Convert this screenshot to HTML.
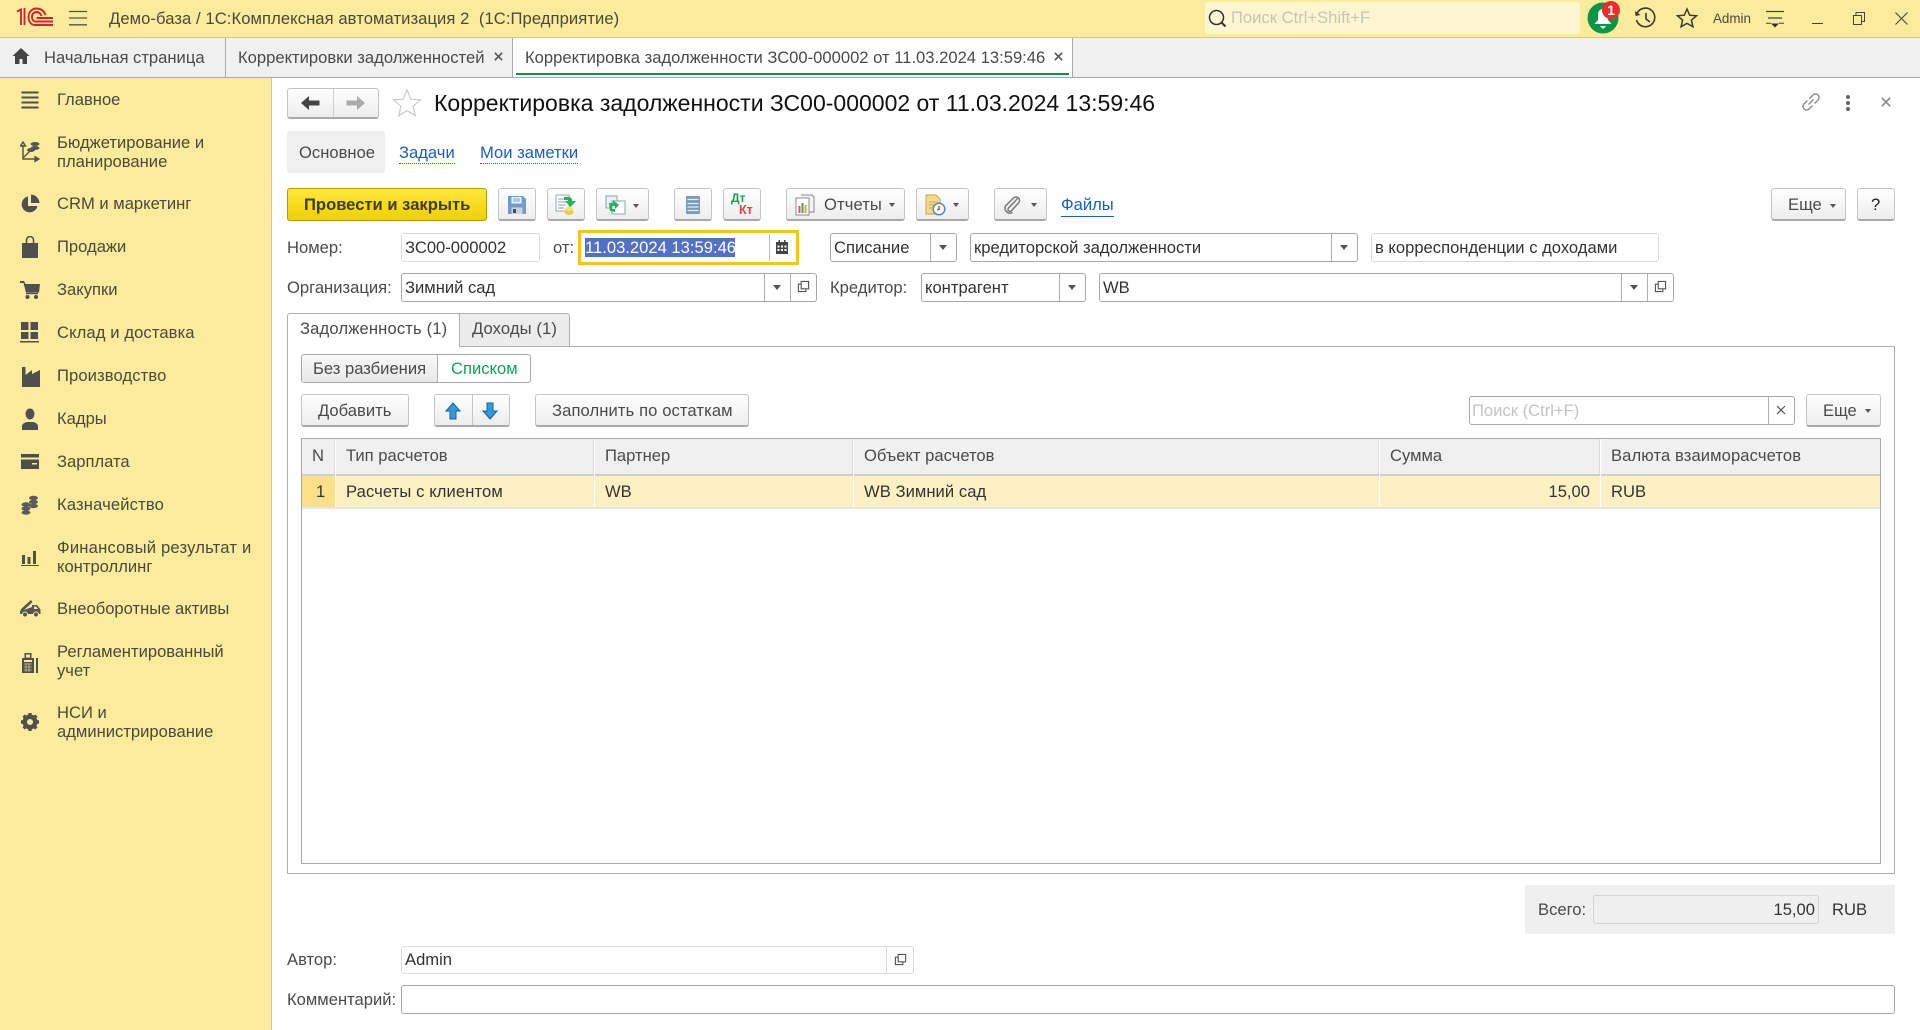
<!DOCTYPE html>
<html lang="ru"><head><meta charset="utf-8"><title>Корректировка задолженности</title>
<style>
html,body{margin:0;padding:0;width:1920px;height:1030px;overflow:hidden;background:#fff}
body{position:relative;font-family:"Liberation Sans",Arial,sans-serif;font-size:16.6px;color:#4a4a4a}
.a,.t,.f,.b,.v,.d,svg{position:absolute}
.t{white-space:nowrap;line-height:20px;height:20px;margin-top:1px}
.f{box-sizing:border-box;background:#fff;border:1px solid #a8a8a8;border-radius:3px}
.l{border-color:#dadada}
.b{box-sizing:border-box;background:linear-gradient(#fff,#ededed);border:1px solid #c4c4c4;border-bottom:2px solid #a9a9a9;border-radius:3px}
.v{width:1px;background:#b0b0b0}
.d{width:0;height:0;border-left:4px solid transparent;border-right:4px solid transparent;border-top:5px solid #555}
.e{border-left-width:3.5px;border-right-width:3.5px;border-top-width:4px}
.k{color:#333}
.s{color:#4a4a3c}
.h{background:#f0f0f0}
.lnk{color:#1a5fc4}
</style></head><body>
<svg width="0" height="0" style="left:0;top:0"><defs>
<symbol id="op" viewBox="0 0 14 14"><path d="M4.5 1.5h8v8h-8zM4.5 4.5h-3v8h8v-3" fill="none" stroke="#555" stroke-width="1.2"/></symbol>
<symbol id="x" viewBox="0 0 12 12"><path d="M2 2l8 8M10 2l-8 8" fill="none" stroke="#555" stroke-width="1.8"/></symbol>
</defs></svg>

<!-- top bar -->
<div class="a" style="left:0;top:0;width:1920px;height:38px;background:#fbeb9c;border-bottom:1px solid #d8c87c;box-sizing:border-box"></div>
<svg style="left:16px;top:7px" width="38" height="21" viewBox="0 0 38 21"><g fill="none" stroke="#d9232a" stroke-width="1.9"><path d="M1 4.5L5 2.5V18M8.5 1V18"/><path d="M37 18H19C15 18 12.5 14.5 12.5 10C12.5 5 16 1.5 20.500 1.500C25 1.500 28 4 29.500 8"/><path d="M37 14.500H19.500C17.500 14.500 16 12.500 16 10C16 7 18 5 20.500 5C23 5 24.500 6.500 25.500 9"/><path d="M37 11H20.500"/></g></svg>
<svg style="left:69px;top:10px" width="18" height="16" viewBox="0 0 18 16"><path d="M0 1.500h18M0 8h18M0 14.800h18" stroke="#55554a" stroke-width="1.300"/></svg>
<div class="t s" style="left:109px;top:8px;letter-spacing:.08px">Демо-база / 1С:Комплексная автоматизация 2&nbsp; (1С:Предприятие)</div>
<div class="a" style="left:1205px;top:2px;width:375px;height:32px;background:#fdf6d0;border-radius:3px"></div>
<svg style="left:1207px;top:8px" width="21" height="21" viewBox="0 0 21 21"><circle cx="9.500" cy="9.500" r="7" fill="none" stroke="#333" stroke-width="1.500"/><path d="M14.500 14.500l4 4" stroke="#333" stroke-width="2"/></svg>
<div class="t" style="left:1231px;top:7px;color:#c6c6b4">Поиск Ctrl+Shift+F</div>
<svg style="left:1585px;top:0" width="36" height="36" viewBox="0 0 36 36"><circle cx="18" cy="18" r="15.500" fill="#0a9647"/><path d="M18 9c-3.500 0-5 3-5 6v5l-3.500 4h17L23 20v-5c0-3-1.500-6-5-6z" fill="#fff"/><path d="M15 26h6l-3 3z" fill="#fff"/><circle cx="26" cy="10" r="9" fill="#f32a2a"/><text x="26" y="15" text-anchor="middle" font-family="Liberation Sans" font-weight="700" font-size="14" fill="#fff">1</text></svg>
<svg style="left:1634px;top:7px" width="23" height="23" viewBox="0 0 23 23"><path d="M3 6.500A9.300 9.300 0 1 1 2.500 13" fill="none" stroke="#3a3a3a" stroke-width="1.600"/><path d="M1 4l.5 5 5-1z" fill="#3a3a3a"/><path d="M12 6v6l4 3" fill="none" stroke="#3a3a3a" stroke-width="1.600"/></svg>
<svg style="left:1676px;top:7px" width="22" height="22" viewBox="0 0 22 22"><path d="M11 2l2.700 6.200 6.800.6-5.100 4.400 1.500 6.600L11 16.400 5.100 19.800l1.500-6.600L1.500 8.800l6.800-.6z" fill="none" stroke="#3a3a3a" stroke-width="1.500"/></svg>
<div class="t s" style="left:1713px;top:8px;font-size:13.4px">Admin</div>
<svg style="left:1766px;top:10px" width="18" height="19" viewBox="0 0 18 19"><path d="M0 1.500h18M2 8h14" stroke="#444" stroke-width="1.300"/><path d="M0 13.300h5M13 13.300h5" stroke="#444" stroke-width="1"/><path d="M5 13.500h8l-4 4z" fill="#333"/></svg>
<div class="a" style="left:1812px;top:23px;width:11px;height:1px;background:#444"></div>
<svg style="left:1853px;top:12px" width="12" height="13" viewBox="0 0 12 13"><path d="M.5 3.500h8v9h-8zM3 3.500V.5h8.500v9H8.500" fill="none" stroke="#444" stroke-width="1"/></svg>
<svg style="left:1895px;top:12px" width="13" height="13" viewBox="0 0 13 13"><path d="M.5.5l12 12M12.500.5l-12 12" stroke="#444" stroke-width="1.100"/></svg>

<!-- tabs -->
<div class="a h" style="left:0;top:38px;width:1920px;height:40px;border-bottom:1px solid #a9a9a9;box-sizing:border-box"></div>
<div class="a" style="left:225px;top:38px;width:1px;height:39px;background:#a9a9a9"></div>
<div class="a" style="left:512px;top:38px;width:561px;height:39px;background:#fff;border-left:1px solid #a9a9a9;border-right:1px solid #a9a9a9;box-sizing:border-box"></div>
<div class="a" style="left:516px;top:73px;width:553px;height:2px;background:#0a8f4d"></div>
<svg style="left:12px;top:47px" width="18" height="17" viewBox="0 0 18 17"><path d="M9 1L0.500 9H3v8h4.500v-5h3v5H15V9h2.500z" fill="#444"/></svg>
<div class="t" style="left:44px;top:47px">Начальная страница</div>
<div class="t" style="left:238px;top:47px">Корректировки задолженностей</div>
<svg style="left:493px;top:51px" width="11" height="11"><use href="#x"/></svg>
<div class="t" style="left:525px;top:47px">Корректировка задолженности ЗС00-000002 от 11.03.2024 13:59:46</div>
<svg style="left:1053px;top:51px" width="11" height="11"><use href="#x"/></svg>

<!-- sidebar -->
<div class="a" style="left:0;top:78px;width:272px;height:952px;background:#fbeb9c;border-right:1px solid #d8c87c;box-sizing:border-box"></div>
<div class="t s" style="left:57px;top:89px">Главное</div>
<div class="t s" style="left:57px;top:132px">Бюджетирование и</div>
<div class="t s" style="left:57px;top:151px">планирование</div>
<div class="t s" style="left:57px;top:193px">CRM и маркетинг</div>
<div class="t s" style="left:57px;top:236px">Продажи</div>
<div class="t s" style="left:57px;top:279px">Закупки</div>
<div class="t s" style="left:57px;top:322px;letter-spacing:.1px">Склад и доставка</div>
<div class="t s" style="left:57px;top:365px;letter-spacing:.1px">Производство</div>
<div class="t s" style="left:57px;top:408px">Кадры</div>
<div class="t s" style="left:57px;top:451px">Зарплата</div>
<div class="t s" style="left:57px;top:494px;letter-spacing:.15px">Казначейство</div>
<div class="t s" style="left:57px;top:537px;letter-spacing:.2px">Финансовый результат и</div>
<div class="t s" style="left:57px;top:556px">контроллинг</div>
<div class="t s" style="left:57px;top:598px">Внеоборотные активы</div>
<div class="t s" style="left:57px;top:641px">Регламентированный</div>
<div class="t s" style="left:57px;top:660px">учет</div>
<div class="t s" style="left:57px;top:702px">НСИ и</div>
<div class="t s" style="left:57px;top:721px">администрирование</div>
<!-- sidebar icons -->
<svg style="left:20px;top:90px" width="20" height="20" viewBox="0 0 20 20"><path d="M1.500 2.500h17M1.500 7.500h17M1.500 12.500h17M1.500 17.500h17" stroke="#4f4f4f" stroke-width="2"/></svg>
<svg style="left:20px;top:141px" width="20" height="22" viewBox="0 0 20 22"><path d="M3 1l-2.500 4h5zM3 4v14h12" fill="none" stroke="#555" stroke-width="1.500"/><path d="M15 15.500l4 2.500-4 2.500zM3 17L12 8" fill="#555" stroke="#555" stroke-width="1.300"/><ellipse cx="15" cy="3" rx="4.500" ry="2" fill="#555"/><ellipse cx="15" cy="7" rx="4.500" ry="2" fill="#555"/><ellipse cx="11" cy="9" rx="4" ry="2" fill="#555"/></svg>
<svg style="left:20px;top:194px" width="20" height="20" viewBox="0 0 20 20"><path d="M8 2.500a8 8 0 1 0 9.500 9.500H8z" fill="#4f4f4f"/><path d="M11 0.500V9h8.500A9 9 0 0 0 11 .5z" fill="#4f4f4f"/></svg>
<svg style="left:22px;top:236px" width="16" height="22" viewBox="0 0 16 22"><path d="M0 7h16v15H0z" fill="#4f4f4f"/><path d="M4.500 8V4a3.500 3.500 0 0 1 7 0v4" fill="none" stroke="#4f4f4f" stroke-width="1.500"/></svg>
<svg style="left:20px;top:280px" width="20" height="20" viewBox="0 0 20 20"><path d="M0 1h4l1.500 3H20l-1 8.500H6L3.500 3H0z" fill="#4f4f4f"/><path d="M6 13.500h12" stroke="#4f4f4f" stroke-width="1.400"/><circle cx="7.500" cy="17" r="2" fill="#4f4f4f"/><circle cx="16" cy="17" r="2" fill="#4f4f4f"/></svg>
<svg style="left:20px;top:322px" width="19" height="21" viewBox="0 0 19 21"><path d="M1 0h7.500v8H1zM10.500 0H18v8h-7.500zM1 10h7.500v7H1zM10.500 10H18v7h-7.500zM0 19h19v1.500H0z" fill="#4f4f4f"/></svg>
<svg style="left:21px;top:366px" width="19" height="21" viewBox="0 0 19 21"><path d="M1 21V1h3.500v8L11 4v4l8-4v17z" fill="#4f4f4f"/></svg>
<svg style="left:22px;top:408px" width="16" height="22" viewBox="0 0 16 22"><ellipse cx="8" cy="6" rx="4.500" ry="5.500" fill="#4f4f4f"/><path d="M0 22v-4c0-2 3-4 5.500-4h5c2.500 0 5.500 2 5.500 4v4z" fill="#4f4f4f"/></svg>
<svg style="left:21px;top:453px" width="18" height="17" viewBox="0 0 18 17"><path d="M0 1h18v3.500H0zM0 6.500h18V16H0z" fill="#4f4f4f"/><path d="M11 10h5v1.500h-5z" fill="#fbeb9c"/></svg>
<svg style="left:21px;top:495px" width="18" height="20" viewBox="0 0 18 20"><g fill="#5b5b5b"><ellipse cx="12.500" cy="3" rx="4.500" ry="2.200"/><ellipse cx="12.500" cy="7" rx="4.500" ry="2.200"/><ellipse cx="12.500" cy="11" rx="4.500" ry="2.200"/><ellipse cx="5" cy="9.500" rx="4.500" ry="2.200"/><ellipse cx="5" cy="13.500" rx="4.500" ry="2.200"/><ellipse cx="5" cy="17.500" rx="4.500" ry="2.200"/></g></svg>
<svg style="left:21px;top:549px" width="18" height="17" viewBox="0 0 18 17"><path d="M1 6h3v9H1zM6.500 8h3v7h-3zM12 2h3v13h-3zM0 16h18v1H0z" fill="#4f4f4f"/></svg>
<svg style="left:20px;top:598px" width="21" height="20" viewBox="0 0 21 20"><path d="M0 14l1-3L11 2l1.500 2L4 12l8-3V7h5l3.500 4.500V16H0z" fill="#555"/><circle cx="5" cy="16.500" r="2.500" fill="#555" stroke="#fbeb9c"/><circle cx="16" cy="16.500" r="2.500" fill="#555" stroke="#fbeb9c"/><path d="M14 8.500h2l2 2.500h-4z" fill="#fbeb9c"/></svg>
<svg style="left:22px;top:653px" width="16" height="20" viewBox="0 0 16 20"><path d="M2.500 0h7v5H12v15H0V5h2.500z" fill="#4f4f4f"/><path d="M4 1.500h4v3H4zM2 7h8v2H2z" fill="#fbeb9c"/><path d="M14 5h2v15h-2z" fill="#4f4f4f"/><path d="M2 11h8M2 14h8M2 17h8M4 10v9M7 10v9" stroke="#fbeb9c" stroke-width=".6"/></svg>
<svg style="left:20px;top:712px" width="20" height="20" viewBox="0 0 20 20"><circle cx="10" cy="10" r="5.500" fill="none" stroke="#4f4f4f" stroke-width="4"/><path d="M10 1v18M1 10h18M3.600 3.600l12.800 12.800M16.400 3.600L3.600 16.400" stroke="#4f4f4f" stroke-width="3.400"/><circle cx="10" cy="10" r="3" fill="#fbeb9c"/></svg>

<!-- header -->
<div class="b" style="left:287px;top:88px;width:92px;height:31px"></div>
<div class="v" style="left:333px;top:89px;height:28px;background:#d0d0d0"></div>
<svg style="left:301px;top:96px" width="19" height="14" viewBox="0 0 19 14"><path d="M8 0v4.500h10.500v5H8V14L0 7z" fill="#444"/></svg>
<svg style="left:346px;top:96px" width="19" height="14" viewBox="0 0 19 14"><path d="M11 0v4.500H.5v5H11V14l8-7z" fill="#aaa"/></svg>
<svg style="left:392px;top:88px" width="30" height="30" viewBox="0 0 30 30"><path d="M15 2l3.800 9.200 9.700.7-7.500 6.300 2.400 9.600L15 22.600 6.600 27.800 9 18.200 1.500 11.900l9.700-.7z" fill="none" stroke="#c9c9c9" stroke-width="1.200"/></svg>
<div class="t" style="left:434px;top:90px;line-height:24px;height:24px;font-size:23px;color:#111">Корректировка задолженности ЗС00-000002 от 11.03.2024 13:59:46</div>
<svg style="left:1801px;top:92px" width="20" height="20" viewBox="0 0 20 20"><path d="M8.500 6.500l3.500-3.500a3.500 3.500 0 0 1 5 5l-3.500 3.500M11.500 13.500L8 17a3.500 3.500 0 0 1-5-5l3.500-3.500M7.500 12.500l5-5" fill="none" stroke="#8a8a8a" stroke-width="1.400"/></svg>
<div class="a" style="left:1846px;top:95px;width:4px;height:4px;border-radius:2px;background:#666"></div>
<div class="a" style="left:1846px;top:101px;width:4px;height:4px;border-radius:2px;background:#666"></div>
<div class="a" style="left:1846px;top:107px;width:4px;height:4px;border-radius:2px;background:#666"></div>
<svg style="left:1881px;top:97px" width="10" height="10" viewBox="0 0 12 12"><path d="M1 1l10 10M11 1L1 11" stroke="#888" stroke-width="1.900"/></svg>
<div class="a h" style="left:287px;top:131px;width:98px;height:42px;border-radius:3px"></div>
<div class="t" style="left:299px;top:142px">Основное</div>
<div class="t lnk" style="left:399px;top:142px;border-bottom:1px dotted #1a5fc4">Задачи</div>
<div class="t lnk" style="left:480px;top:142px;border-bottom:1px dotted #1a5fc4">Мои заметки</div>

<!-- toolbar -->
<div class="b" style="left:287px;top:188px;width:200px;height:33px;background:linear-gradient(#ffe83c,#efd000);border:1px solid #b39c10;border-radius:3px"></div>
<div class="t" style="left:304px;top:194px;font-weight:700;color:#403c1c;font-size:16.6px">Провести и закрыть</div>
<div class="b" style="left:498px;top:188px;width:38px;height:33px"></div>
<svg style="left:508px;top:196px" width="18" height="18" viewBox="0 0 18 18"><path d="M0 0h15l3 3v15H0z" fill="#6f9ccc"/><path d="M3.500 1h10v6.500h-10z" fill="#f1f5f9"/><path d="M5 3h7M5 5h7" stroke="#6f9ccc"/><path d="M3.500 11.500h11V18h-11z" fill="#c9d5de"/><path d="M5 13h3v4H5z" fill="#446"/></svg>
<div class="b" style="left:547px;top:188px;width:38px;height:33px"></div>
<svg style="left:555px;top:194px" width="22" height="22" viewBox="0 0 22 22"><path d="M1 1h13v16H1z" fill="#fff" stroke="#9aa"/><path d="M3 5h8M3 8h8M3 11h8M3 14h6" stroke="#99a"/><path d="M9 3h5a3 3 0 0 1 3 3v1h4l-5.500 6L10 7h3V6H9z" fill="#1fb35c"/><ellipse cx="14" cy="18" rx="4.500" ry="3" fill="#e8c94a"/><ellipse cx="14" cy="15" rx="4.500" ry="2.200" fill="#f5e07a"/></svg>
<div class="b" style="left:596px;top:188px;width:53px;height:33px"></div>
<svg style="left:605px;top:195px" width="21" height="20" viewBox="0 0 21 20"><path d="M1 1h11v12H1z" fill="#eef" stroke="#8a9"/><path d="M7 6h13v13H7z" fill="#fff" stroke="#8a9"/><path d="M4 8h4V5l6 5-4 4v-3H7v3h3v3l-5-1z" fill="#21b45f"/></svg>
<div class="d e" style="left:633px;top:204px"></div>
<div class="b" style="left:674px;top:188px;width:38px;height:33px"></div>
<svg style="left:686px;top:196px" width="14" height="18" viewBox="0 0 14 18"><path d="M1 0h12a1 1 0 0 1 1 1v16a1 1 0 0 1-1 1H1a1 1 0 0 1-1-1V1a1 1 0 0 1 1-1z" fill="#7b9cb9"/><path d="M1.500 3.500h11M1.500 7.500h11M1.500 11h11M1.500 14.500h11" stroke="#e6eef4" stroke-width="1.200"/></svg>
<div class="b" style="left:723px;top:188px;width:38px;height:33px"></div>
<div class="t" style="left:731px;top:190px;font-size:12px;line-height:14px;font-weight:700;color:#17a155">Дт</div>
<div class="t" style="left:739px;top:202px;font-size:12.5px;line-height:14px;font-weight:700;color:#e8414a">Кт</div>
<div class="b" style="left:786px;top:188px;width:119px;height:33px"></div>
<svg style="left:795px;top:194px" width="20" height="22" viewBox="0 0 20 22"><path d="M6 1h11l2 2v15h-5" fill="#f3f3f3" stroke="#889"/><path d="M1 4h13v17H1z" fill="#fff" stroke="#889"/><path d="M3.500 12h2v7h-2z" fill="#e05050"/><path d="M6.500 9h2v10h-2z" fill="#39a860"/><path d="M9.500 11h2v8h-2z" fill="#d9a93a"/></svg>
<div class="t" style="left:824px;top:194px;letter-spacing:.1px">Отчеты</div>
<div class="d e" style="left:889px;top:203px"></div>
<div class="b" style="left:916px;top:188px;width:53px;height:33px"></div>
<svg style="left:925px;top:194px" width="21" height="22" viewBox="0 0 21 22"><path d="M1 1h10l4 4v15H1z" fill="#f3d98a" stroke="#c9a94a"/><path d="M4 8h8M4 11h5M4 14h5" stroke="#c9a94a"/><circle cx="14" cy="15" r="5.800" fill="#fff" stroke="#5b86b3" stroke-width="1.500"/><path d="M14 12v3.500h-2" stroke="#e04040" stroke-width="1.400" fill="none"/></svg>
<div class="d e" style="left:953px;top:203px"></div>
<div class="b" style="left:994px;top:188px;width:53px;height:33px"></div>
<svg style="left:1003px;top:196px" width="18" height="18" viewBox="0 0 18 18"><path d="M15 3L6 12.500a2 2 0 0 0 3 2.700l7-7.700a3.500 3.500 0 0 0-5-5L3 10.500a5 5 0 0 0 7 6.500" transform="translate(-.5 -.5)" fill="none" stroke="#777" stroke-width="1.500"/></svg>
<div class="d e" style="left:1031px;top:203px"></div>
<div class="t" style="left:1061px;top:194px;color:#1a5fc4;border-bottom:1px solid #1a5fc4;height:21px">Файлы</div>
<div class="b" style="left:1771px;top:188px;width:75px;height:33px"></div>
<div class="t" style="left:1788px;top:194px">Еще</div>
<div class="d e" style="left:1830px;top:204px"></div>
<div class="b" style="left:1857px;top:188px;width:38px;height:33px"></div>
<div class="t" style="left:1871px;top:194px;color:#222">?</div>

<!-- rows -->
<div class="t" style="left:287px;top:237px">Номер:</div>
<div class="f l" style="left:401px;top:233px;width:139px;height:29px"></div>
<div class="t k" style="left:405px;top:237px">ЗС00-000002</div>
<div class="t" style="left:553px;top:237px">от:</div>
<div class="f" style="left:578px;top:230px;width:221px;height:35px;border:3px solid #f5c518;border-radius:0"></div>
<div class="a" style="left:585px;top:238px;width:150px;height:19px;background:#5470c6"></div>
<div class="t" style="left:585px;top:237px;color:#fff">11.03.2024 13:59:46</div>
<div class="v" style="left:769px;top:234px;height:27px;background:#bbb"></div>
<svg style="left:776px;top:240px" width="12" height="14" viewBox="0 0 12 14"><path d="M0 2h12v12H0z" fill="#444"/><path d="M2.500 0h1.500v3H2.500zM8 0h1.500v3H8z" fill="#444"/><path d="M1.500 5.500h2v2h-2zM5 5.500h2v2H5zM8.500 5.500h2v2h-2zM1.500 9h2v2h-2zM5 9h2v2H5zM8.500 9h2v2h-2z" fill="#fff"/></svg>
<div class="f" style="left:830px;top:233px;width:127px;height:29px"></div>
<div class="v" style="left:930px;top:234px;height:27px"></div>
<div class="t k" style="left:834px;top:237px">Списание</div>
<div class="d" style="left:939px;top:245px"></div>
<div class="f" style="left:970px;top:233px;width:388px;height:29px"></div>
<div class="v" style="left:1331px;top:234px;height:27px"></div>
<div class="t k" style="left:974px;top:237px">кредиторской задолженности</div>
<div class="d" style="left:1340px;top:245px"></div>
<div class="f l" style="left:1371px;top:233px;width:288px;height:29px"></div>
<div class="t k" style="left:1375px;top:237px">в корреспонденции с доходами</div>

<div class="t" style="left:287px;top:277px">Организация:</div>
<div class="f" style="left:401px;top:273px;width:416px;height:29px"></div>
<div class="v" style="left:764px;top:274px;height:27px"></div>
<div class="v" style="left:790px;top:274px;height:27px"></div>
<div class="t k" style="left:405px;top:277px">Зимний сад</div>
<div class="d" style="left:773px;top:285px"></div>
<svg style="left:797px;top:280px" width="13" height="13"><use href="#op"/></svg>
<div class="t" style="left:830px;top:277px">Кредитор:</div>
<div class="f" style="left:921px;top:273px;width:165px;height:29px"></div>
<div class="v" style="left:1059px;top:274px;height:27px"></div>
<div class="t k" style="left:925px;top:277px">контрагент</div>
<div class="d" style="left:1068px;top:285px"></div>
<div class="f" style="left:1099px;top:273px;width:575px;height:29px"></div>
<div class="v" style="left:1621px;top:274px;height:27px"></div>
<div class="v" style="left:1647px;top:274px;height:27px"></div>
<div class="t k" style="left:1103px;top:277px">WB</div>
<div class="d" style="left:1630px;top:285px"></div>
<svg style="left:1654px;top:280px" width="13" height="13"><use href="#op"/></svg>

<!-- page panel -->
<div class="a" style="left:287px;top:346px;width:1608px;height:528px;border:1px solid #b0b0b0;box-sizing:border-box"></div>
<div class="a" style="left:287px;top:313px;width:173px;height:34px;background:#fff;border:1px solid #b0b0b0;border-bottom:0;box-sizing:border-box;border-radius:3px 3px 0 0"></div>
<div class="a" style="left:459px;top:313px;width:111px;height:33px;background:#ececec;border:1px solid #b0b0b0;border-bottom:0;box-sizing:border-box;border-radius:0 3px 0 0"></div>
<div class="t" style="left:300px;top:318px;letter-spacing:.15px">Задолженность (1)</div>
<div class="t" style="left:472px;top:318px;letter-spacing:.1px">Доходы (1)</div>

<div class="a" style="left:301px;top:354px;width:230px;height:29px;border:1px solid #a9a9a9;border-radius:3px;box-sizing:border-box;background:#fff"></div>
<div class="a" style="left:302px;top:355px;width:136px;height:27px;background:linear-gradient(#f8f8f8,#e8e8e8);border-right:1px solid #b0b0b0;border-radius:3px 0 0 3px;box-sizing:border-box"></div>
<div class="t" style="left:313px;top:358px">Без разбиения</div>
<div class="t" style="left:451px;top:358px;color:#10a05c">Списком</div>

<div class="b" style="left:301px;top:394px;width:108px;height:33px"></div>
<div class="t" style="left:318px;top:400px">Добавить</div>
<div class="b" style="left:434px;top:394px;width:76px;height:33px"></div>
<div class="v" style="left:472px;top:395px;height:30px;background:#c4c4c4"></div>
<svg style="left:445px;top:402px" width="16" height="18" viewBox="0 0 16 18"><path d="M8 1l7 8h-4v8H5V9H1z" fill="#2f9be5" stroke="#17608f"/></svg>
<svg style="left:482px;top:402px" width="16" height="18" viewBox="0 0 16 18"><path d="M8 17l7-8h-4V1H5v8H1z" fill="#2f9be5" stroke="#17608f"/></svg>
<div class="b" style="left:535px;top:394px;width:214px;height:33px"></div>
<div class="t" style="left:552px;top:400px;letter-spacing:.1px">Заполнить по остаткам</div>
<div class="f" style="left:1469px;top:396px;width:326px;height:29px"></div>
<div class="v" style="left:1768px;top:397px;height:27px"></div>
<div class="t" style="left:1472px;top:400px;color:#c4c4c4">Поиск (Ctrl+F)</div>
<svg style="left:1776px;top:405px" width="10" height="10" viewBox="0 0 10 10"><path d="M1 1l8 8M9 1L1 9" stroke="#555" stroke-width="1.200"/></svg>
<div class="b" style="left:1806px;top:394px;width:75px;height:33px"></div>
<div class="t" style="left:1823px;top:400px">Еще</div>
<div class="d e" style="left:1865px;top:409px"></div>

<!-- table -->
<div class="a" style="left:301px;top:438px;width:1580px;height:426px;border:1px solid #a9a9a9;box-sizing:border-box"></div>
<div class="a h" style="left:302px;top:439px;width:1578px;height:35px"></div>
<div class="a" style="left:302px;top:474px;width:1578px;height:2px;background:#cfcfcf"></div>
<div class="a" style="left:302px;top:476px;width:1578px;height:31px;background:#fdf1c3"></div>
<div class="a" style="left:302px;top:476px;width:33px;height:31px;background:#fde08a"></div>
<div class="a" style="left:302px;top:507px;width:1578px;height:2px;background:#e6e6e6"></div>
<div class="v" style="left:335px;top:439px;height:68px;background:#fff"></div>
<div class="v" style="left:594px;top:439px;height:68px;background:#fff"></div>
<div class="v" style="left:853px;top:439px;height:68px;background:#fff"></div>
<div class="v" style="left:1379px;top:439px;height:68px;background:#fff"></div>
<div class="v" style="left:1600px;top:439px;height:68px;background:#fff"></div>
<div class="v" style="left:334px;top:439px;height:35px;background:#dcdcdc"></div>
<div class="v" style="left:593px;top:439px;height:35px;background:#dcdcdc"></div>
<div class="v" style="left:852px;top:439px;height:35px;background:#dcdcdc"></div>
<div class="v" style="left:1378px;top:439px;height:35px;background:#dcdcdc"></div>
<div class="v" style="left:1599px;top:439px;height:35px;background:#dcdcdc"></div>
<div class="t" style="left:312px;top:445px">N</div>
<div class="t" style="left:346px;top:445px">Тип расчетов</div>
<div class="t" style="left:605px;top:445px">Партнер</div>
<div class="t" style="left:864px;top:445px">Объект расчетов</div>
<div class="t" style="left:1390px;top:445px">Сумма</div>
<div class="t" style="left:1611px;top:445px;letter-spacing:.1px">Валюта взаиморасчетов</div>
<div class="t k" style="left:316px;top:481px">1</div>
<div class="t k" style="left:346px;top:481px;letter-spacing:.1px">Расчеты с клиентом</div>
<div class="t k" style="left:605px;top:481px">WB</div>
<div class="t k" style="left:864px;top:481px;letter-spacing:.05px">WB Зимний сад</div>
<div class="t k" style="left:1490px;width:100px;text-align:right;top:481px">15,00</div>
<div class="t k" style="left:1611px;top:481px">RUB</div>

<!-- total -->
<div class="a" style="left:1525px;top:885px;width:370px;height:49px;background:#efefef"></div>
<div class="t" style="left:1538px;top:899px">Всего:</div>
<div class="f" style="left:1593px;top:895px;width:226px;height:29px;background:#efefef;border-color:#d2d2d2"></div>
<div class="t k" style="left:1715px;width:100px;text-align:right;top:899px">15,00</div>
<div class="t k" style="left:1832px;top:899px">RUB</div>

<!-- footer -->
<div class="t" style="left:287px;top:949px">Автор:</div>
<div class="f l" style="left:401px;top:946px;width:513px;height:28px"></div>
<div class="v" style="left:886px;top:947px;height:26px;background:#d5d5d5"></div>
<div class="t k" style="left:405px;top:949px">Admin</div>
<svg style="left:894px;top:953px" width="13" height="13"><use href="#op"/></svg>
<div class="t" style="left:287px;top:989px">Комментарий:</div>
<div class="f" style="left:401px;top:985px;width:1494px;height:29px"></div>
</body></html>
